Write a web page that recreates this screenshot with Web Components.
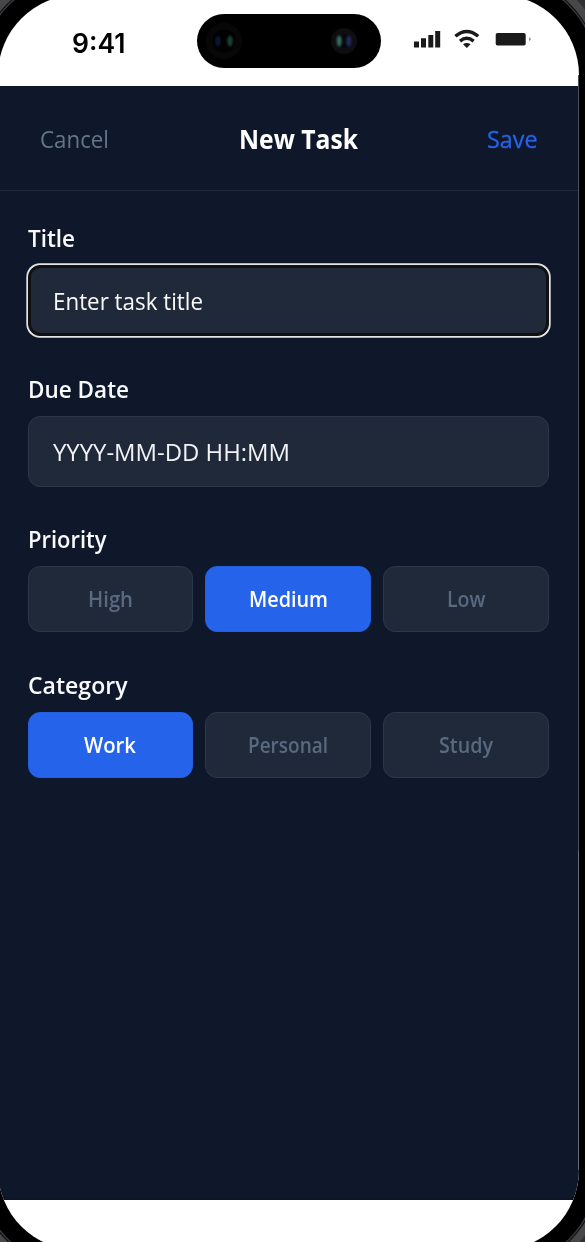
<!DOCTYPE html>
<html lang="en"><head><meta charset="utf-8"><title>New Task</title>
<style>html,body{margin:0;height:1242px;overflow:hidden;background:#000}</style></head><body>
<phone-frame>
<status-bar></status-bar>
<task-header></task-header>
<task-form>
<form-field label="Title" lw="47"><text-box focused text="Enter task title" tw="150"></text-box></form-field>
<form-field label="Due Date" lw="101"><text-box text="YYYY-MM-DD HH:MM" tw="237"></text-box></form-field>
<form-field label="Priority" lw="78.5"><choice-group><choice-button text="High" tw="45"></choice-button><choice-button active text="Medium" tw="79"></choice-button><choice-button text="Low" tw="38.5"></choice-button></choice-group></form-field>
<form-field label="Category" lw="99.5"><choice-group><choice-button active text="Work" tw="52"></choice-button><choice-button text="Personal" tw="80"></choice-button><choice-button text="Study" tw="54"></choice-button></choice-group></form-field>
</task-form>
</phone-frame>
<script>
const define=(name,html,init)=>customElements.define(name,class extends HTMLElement{
  connectedCallback(){
    if(this.shadowRoot)return;
    const t=document.createElement('template');
    t.innerHTML=typeof html==='function'?html(this):html;
    this.attachShadow({mode:'open'}).append(t.content.cloneNode(true));
    if(init)init(this);
  }
});
// A single line of text condensed or widened to a given advance width.
define('fit-text',`<style>:host{display:block;white-space:nowrap}span{display:inline-block;transform-origin:0 50%}</style><span><slot></slot></span>`,el=>{
  const s=el.shadowRoot.querySelector('span'),w=parseFloat(el.getAttribute('width'));
  el.style.width=w+'px';
  s.style.transform='scaleX('+(w/s.getBoundingClientRect().width)+')';
});
define('phone-frame',`<style>
:host{display:block;position:relative;width:585px;height:1242px;overflow:hidden;background:#000;font-family:"Open Sans","Noto Sans",sans-serif}
.shell{position:absolute;left:-2.5px;top:-5px;width:581px;height:1255px;border-radius:80px;background:#fff;overflow:hidden}
.bezel{position:absolute;left:-2.5px;top:-5px;width:581px;height:1255px;border-radius:80px;box-shadow:0 0 0 18px #000,0 0 0 19.5px #38383a,0 0 0 20.5px #0c0c0c,0 0 0 28px #47474a,0 0 0 60px #303032}
.edge{position:absolute;left:578px;top:75px;width:1px;height:1095px;background:linear-gradient(#4a515e 776px,#626a72 776px)}
.content{display:flex;flex-direction:column;box-sizing:border-box;height:1255px;padding:5px 0 50px 2.5px;width:581px}
</style><div class="bezel"></div><div class="shell"><div class="content"><slot></slot></div></div><div class="edge"></div>`);
define('status-bar',`<style>
:host{display:grid;grid-template-columns:197px 184px 1fr;height:86px;flex:none}
.time{padding:26px 0 0 72px;font:600 26.5px/34px Inter,sans-serif;color:#000}
.island{margin-top:14px;height:54px;border-radius:27px;background:#000;display:flex;justify-content:space-between;align-items:center;padding:0 24px 0 9px;box-sizing:border-box}
svg{display:block}.icons{padding:24px 0 0 29px}
</style>
<div class="time"><fit-text width="53.5">9:41</fit-text></div>
<div class="island">
<svg width="36" height="36" viewBox="0 0 36 36"><defs><filter id="b"><feGaussianBlur stdDeviation="1"/></filter></defs><circle cx="18" cy="18" r="18" fill="#070707"/><circle cx="18" cy="18" r="11.5" fill="#010101"/><g filter="url(#b)"><ellipse cx="12" cy="18" rx="2.6" ry="5.5" fill="#111535"/><ellipse cx="24" cy="18" rx="2.6" ry="5.5" fill="#1f4338"/></g></svg>
<svg width="26" height="26" viewBox="0 0 26 26"><defs><filter id="b"><feGaussianBlur stdDeviation=".9"/></filter></defs><circle cx="13" cy="13" r="13" fill="#0e0e10"/><circle cx="13" cy="13" r="7" fill="#08080b"/><g filter="url(#b)"><ellipse cx="8.2" cy="13" rx="2.4" ry="5.5" fill="#367263"/><ellipse cx="17.8" cy="13" rx="2.4" ry="5.5" fill="#202b65"/></g></svg></div>
<div class="icons"><svg width="130" height="30" viewBox="410 24 130 30" fill="#1a1a1a"><path d="M414 41.5h5V47.5h-5zM421 38.3h5V47.5h-5zM428.3 35h5V47.5h-5zM435.2 31h5V47.5h-5z"/>
<path d="M466.8 47.9l-3.8-3.6q3.8-2.5 7.6 0z"/><g fill="none" stroke="#1a1a1a" stroke-width="3.4"><path d="M460 41.1q6.8-5.6 13.6 0"/><path d="M455.4 36.3q11.4-9.6 22.8 0"/></g>
<rect x="495.7" y="33" width="30" height="12.6" rx="1.8"/><path d="M529.3 37.3q2.6 1.9 0 3.8z" fill="#555"/></svg></div>`);
define('task-header',`<style>
:host{display:flex;justify-content:space-between;align-items:flex-start;flex:none;height:105px;box-sizing:border-box;padding:36px 41px 0 39.5px;width:578.5px;background:#0f172a;border-bottom:1px solid #1e293b;font-size:24px;line-height:34px;color:#64748b}
.h{font-weight:700;font-size:26.5px;color:#fff;margin-left:1px}.s{color:#2563eb;-webkit-text-stroke:.3px #2563eb}
</style><fit-text width="69">Cancel</fit-text><fit-text class="h" width="119">New Task</fit-text><fit-text class="s" width="50.5">Save</fit-text>`);
define('task-form',`<style>:host{display:flex;flex-direction:column;gap:35.6px;flex:1;background:linear-gradient(#0f172a calc(100% - 4px),#0c1327);padding:30px 29px 0 27.5px;box-sizing:border-box;width:578.5px}</style><slot></slot>`);
define('form-field',e=>`<style>:host{display:block}.l{color:#f8fafc;font-weight:600;font-size:23.5px;line-height:34px;margin-bottom:10px}</style><fit-text class="l" width="${e.getAttribute('lw')}">${e.getAttribute('label')}</fit-text><slot></slot>`);
define('text-box',e=>`<style>:host{display:flex;box-sizing:border-box;height:71px;margin-top:10px;padding-left:24px;align-items:center;border:1.5px solid #2b384a;border-radius:12px;background:#1f293a;font-size:24px;line-height:34px;color:#f1f3f5;padding-top:1px;width:521.5px}
:host([focused]){border-color:#101010;box-shadow:inset 0 0 0 2px #101010,0 0 0 1.7px #e4e4e6;color:#fafafa}</style><fit-text width="${e.getAttribute('tw')}">${e.getAttribute('text')}</fit-text>`);
define('choice-group',`<style>:host{display:grid;grid-template-columns:repeat(3,1fr);gap:12px;width:521.5px}</style><slot></slot>`);
define('choice-button',e=>`<style>:host{display:flex;box-sizing:border-box;height:66px;align-items:center;justify-content:center;border:1.5px solid #2b384a;border-radius:12px;background:#1f293a;font-weight:600;font-size:21px;line-height:30px;color:#586980}
:host([active]){background:#2563eb;border-color:#2360df;color:#fff}</style><fit-text width="${e.getAttribute('tw')}">${e.getAttribute('text')}</fit-text>`);
</script></body></html>
